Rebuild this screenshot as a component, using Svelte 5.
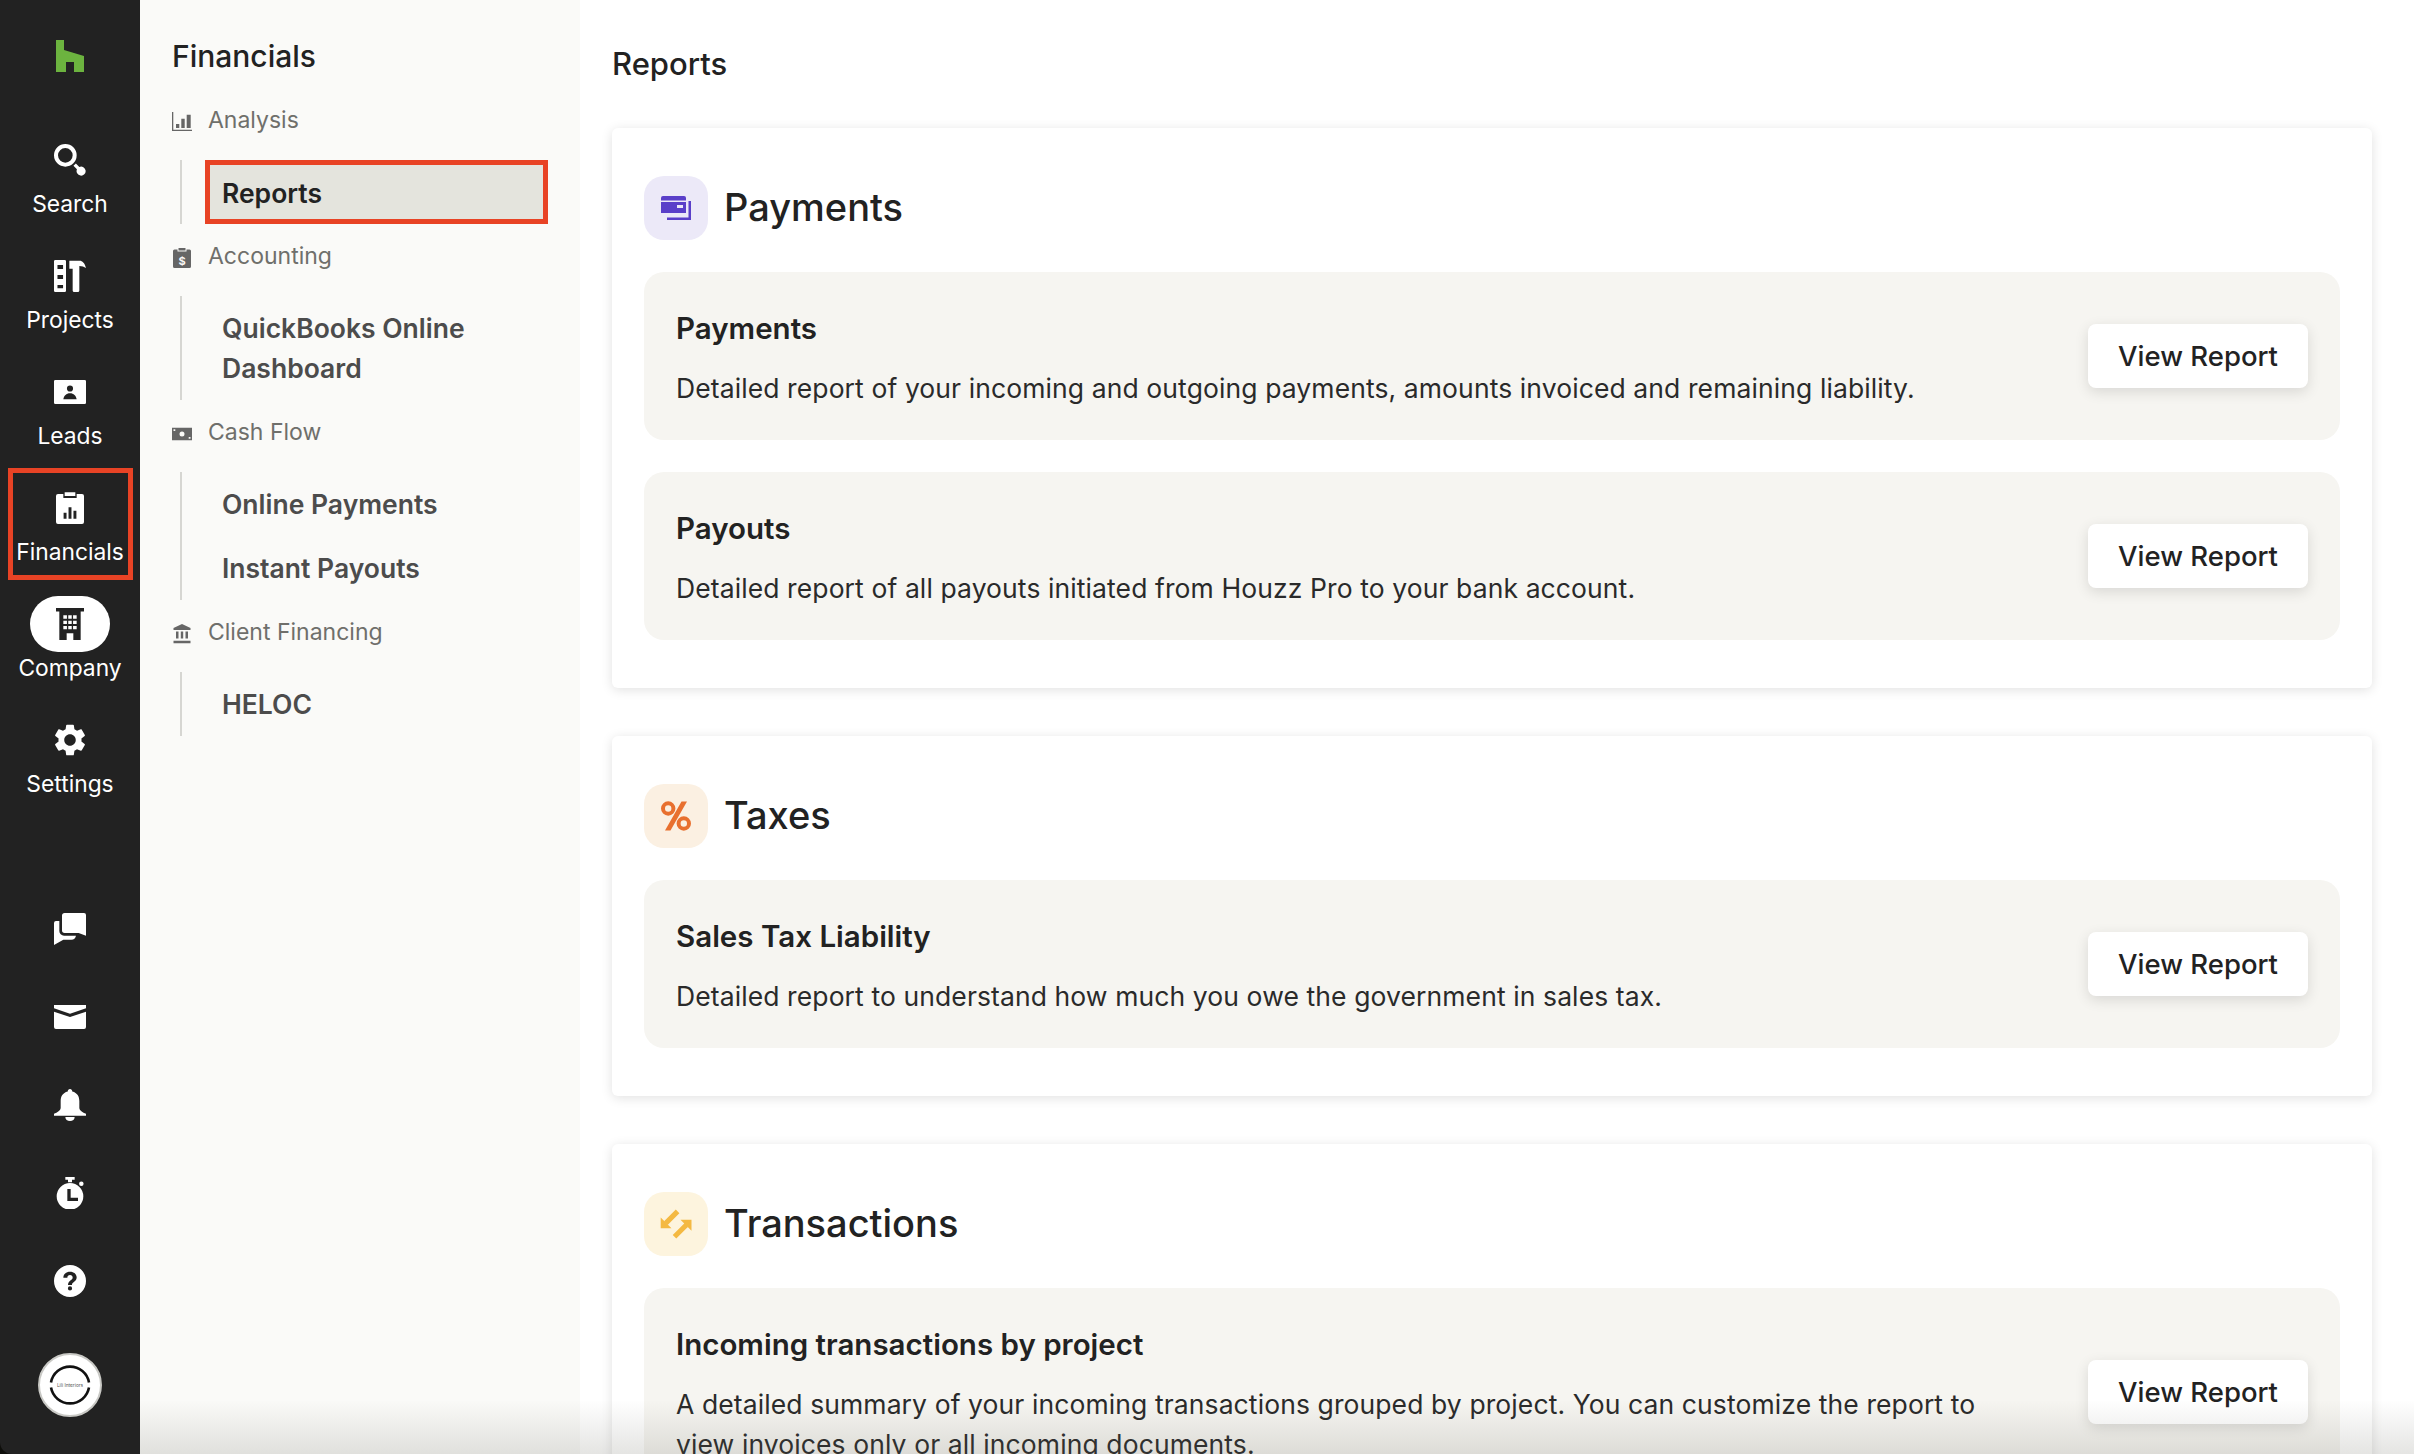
<script>
	const icons = {
		search: { d: 'M0 8.5a8.5 8.5 0 1 0 17 0a8.5 8.5 0 1 0 -17 0Z M3 8.5a5.5 5.5 0 1 1 11 0a5.5 5.5 0 1 1 -11 0Z M14.6 16.4L16.4 14.6L19 17.2A3.4 3.4 0 1 1 17.2 19Z', vb: '0 0 24 24' },
		projects: { d: 'M1 0H8a1 1 0 0 1 1 1V23a1 1 0 0 1-1 1H1a1 1 0 0 1-1-1V1a1 1 0 0 1 1-1Z M2.6 3.7V6.7H6.8V3.7Z M2.6 11.2V14.2H6.8V11.2Z M2.6 18.7V21.2H6.8V18.7Z M11.5 .5H20Q23 1.5 24 6Q22 4.5 19 4.5V22.8A1.2 1.2 0 0 1 17.8 24H15.2A1.2 1.2 0 0 1 14 22.8V6.5H11.5Z', vb: '0 0 24 24' },
		leads: { d: 'M1 3H23a1 1 0 0 1 1 1V20a1 1 0 0 1-1 1H1a1 1 0 0 1-1-1V4a1 1 0 0 1 1-1Z M9.7 9.4a2.3 2.3 0 1 0 4.6 0a2.3 2.3 0 1 0 -4.6 0Z M7 17.5H17C16.5 14.8 14.8 13 12 13S7.5 14.8 7 17.5Z', vb: '0 0 24 24' },
		financials: { d: 'M3 1.5H7V4.5H17V1.5H21A1.5 1.5 0 0 1 22.5 3V22.5A1.5 1.5 0 0 1 21 24H3A1.5 1.5 0 0 1 1.5 22.5V3A1.5 1.5 0 0 1 3 1.5Z M8 .2H16V3H8Z M7.2 15.5H9.4V20H7.2Z M10.9 11.5H13.1V20H10.9Z M14.6 14H16.8V20H14.6Z', vb: '0 0 24 24' },
		company: { d: 'M1.5 0H22.5V2.6H20V24H14.5V19H9.5V24H4V2.6H1.5Z M7 5.5V8H9.7V5.5Z M10.7 5.5V8H13.3V5.5Z M14.3 5.5V8H17V5.5Z M7 9.5V12H9.7V9.5Z M10.7 9.5V12H13.3V9.5Z M14.3 9.5V12H17V9.5Z M7 13.5V16H9.7V13.5Z M10.7 13.5V16H13.3V13.5Z M14.3 13.5V16H17V13.5Z', vb: '0 0 24 24' },
		settings: { d: 'M19.14 12.94c.04-.3.06-.61.06-.94 0-.32-.02-.64-.07-.94l2.03-1.58c.18-.14.23-.41.12-.61l-1.92-3.32c-.12-.22-.37-.29-.59-.22l-2.39.96c-.5-.38-1.03-.7-1.62-.94l-.36-2.54c-.04-.24-.24-.41-.48-.41h-3.84c-.24 0-.43.17-.47.41l-.36 2.54c-.59.24-1.13.57-1.62.94l-2.39-.96c-.22-.08-.47 0-.59.22L2.74 8.87c-.12.21-.08.47.12.61l2.03 1.58c-.05.3-.09.63-.09.94s.02.64.07.94l-2.03 1.58c-.18.14-.23.41-.12.61l1.92 3.32c.12.22.37.29.59.22l2.39-.96c.5.38 1.03.7 1.62.94l.36 2.54c.05.24.24.41.48.41h3.84c.24 0 .44-.17.47-.41l.36-2.54c.59-.24 1.13-.56 1.62-.94l2.39.96c.22.08.47 0 .59-.22l1.92-3.32c.12-.22.07-.47-.12-.61l-2.01-1.58zM12 15.6c-1.98 0-3.6-1.62-3.6-3.6s1.62-3.6 3.6-3.6 3.6 1.62 3.6 3.6-1.62 3.6-3.6 3.6z', vb: '2.6 2 18.8 20' },
		chat: { d: 'M8 0H22.5A1.5 1.5 0 0 1 24 1.5V17L18.5 15H8A2 2 0 0 1 6 13V2A2 2 0 0 1 8 0Z M1.5 6H4V13.5A3.5 3.5 0 0 0 7.5 17H16.5C16 19 15 20 13 20H7L0 24V7.5A1.5 1.5 0 0 1 1.5 6Z', vb: '0 0 24 24' },
		mail: { d: 'M0 3H24V5.5L12 9.5L0 5.5Z M0 8L12 12L24 8V19.5A1.5 1.5 0 0 1 22.5 21H1.5A1.5 1.5 0 0 1 0 19.5Z', vb: '0 0 24 24' },
		bell: { d: 'M12 0C13 0 13.7 .7 13.7 1.8C17.5 2.8 19 5.5 19 9V14C19 16 21.5 17.5 24 18.5V20H0V18.5C2.5 17.5 5 16 5 14V9C5 5.5 6.5 2.8 10.3 1.8C10.3 .7 11 0 12 0Z M8.5 21H15.5C15.5 22.8 14 24 12 24S8.5 22.8 8.5 21Z', vb: '0 0 24 24' },
		timer: { d: 'M8.5 0H15.5V2H13.5V4H10.5V2H8.5Z M18.8 5a1.7 1.7 0 1 0 3.4 0a1.7 1.7 0 1 0 -3.4 0Z M2 14.5a10 10 0 1 0 20 0a10 10 0 1 0 -20 0Z M10 9H12.5V15.5H18V18H10Z', vb: '0 0 24 24' },
		help: { d: 'M0 12a12 12 0 1 0 24 0a12 12 0 1 0 -24 0Z M12 5C9 5 7 6.8 7 9.5H10C10 8.3 10.8 7.5 12 7.5S14 8.2 14 9.3C14 10.3 13.4 10.8 12.5 11.4C11.3 12.3 10.5 13.2 10.5 15H13.5C13.5 13.9 13.9 13.4 14.9 12.7C16.2 11.8 17 10.8 17 9.2C17 6.8 15 5 12 5Z M10.4 17.6a1.6 1.6 0 1 0 3.2 0a1.6 1.6 0 1 0 -3.2 0Z', vb: '0 0 24 24' },
		analysis: { d: 'M0 0H1.3V17.7H20V19H0Z M4 12H7.3V16H4Z M9.3 6.7H12.7V16H9.3Z M14.7 2.7H18.7V16H14.7Z', vb: '0 0 20 20' },
		accounting: { d: 'M2.5 1.5H5.5V3.5H14.5V1.5H17.5A1.5 1.5 0 0 1 19 3V18.5A1.5 1.5 0 0 1 17.5 20H2.5A1.5 1.5 0 0 1 1 18.5V3A1.5 1.5 0 0 1 2.5 1.5Z M6.5 0H13.5V2.5H6.5Z', vb: '0 0 20 20', glyph: '$' },
		cash: { d: 'M0 3.7H20V16.3H0Z M7.5 10a2.5 2.5 0 1 0 5 0a2.5 2.5 0 1 0 -5 0Z M1.5 5.2H3.3V7H1.5Z M16.7 13H18.5V14.8H16.7Z', vb: '0 0 20 20' },
		bank: { d: 'M10 0L18.5 4V6H1.5V4Z M4 7.5H6.5V14.5H4Z M8.8 7.5H11.2V14.5H8.8Z M13.5 7.5H16V14.5H13.5Z M1.5 16.7H18.5V19.3H1.5Z', vb: '0 0 20 20' },
		wallet: { d: 'M3 4H24A2 2 0 0 1 26 6V8.5H1V6A2 2 0 0 1 3 4Z M1 10H26V21H1Z M17 13V16H23V13Z M28.5 9H31V28H7V25.5H28.5Z', vb: '0 0 32 32' },
		percent: { d: 'M1 8.5a7.2 7.2 0 1 0 14.4 0a7.2 7.2 0 1 0 -14.4 0Z M5 8.5a3.2 3.2 0 1 1 6.4 0a3.2 3.2 0 1 1 -6.4 0Z M16.6 23.5a7.2 7.2 0 1 0 14.4 0a7.2 7.2 0 1 0 -14.4 0Z M20.6 23.5a3.2 3.2 0 1 1 6.4 0a3.2 3.2 0 1 1 -6.4 0Z M21.5 1.5H27L10.5 30.5H5Z', vb: '0 0 32 32' },
		transfer: { d: 'M.7 9.5L11.5 20.3H.7Z M4.3 13.1L7.9 16.7L19.4 5.2L15.8 1.6Z M20.5 11.7H31.5V22.7Z M24.2 15.4L27.8 19L16.3 30.5L12.7 26.9Z', vb: '0 0 32 32' }
	};

	const mainNav = [
		{ label: 'Search', icon: 'search' },
		{ label: 'Projects', icon: 'projects' },
		{ label: 'Leads', icon: 'leads' },
		{ label: 'Financials', icon: 'financials', marked: true },
		{ label: 'Company', icon: 'company', active: true },
		{ label: 'Settings', icon: 'settings' }
	];

	const utilNav = ['chat', 'mail', 'bell', 'timer', 'help'];

	const sections = [
		{ label: 'Analysis', icon: 'analysis', items: [{ label: 'Reports', active: true }] },
		{ label: 'Accounting', icon: 'accounting', items: [{ label: 'QuickBooks Online Dashboard' }] },
		{ label: 'Cash Flow', icon: 'cash', items: [{ label: 'Online Payments' }, { label: 'Instant Payouts' }] },
		{ label: 'Client Financing', icon: 'bank', items: [{ label: 'HELOC' }] }
	];

	const groups = [
		{
			title: 'Payments',
			icon: 'wallet',
			tone: 'violet',
			reports: [
				{ name: 'Payments', text: 'Detailed report of your incoming and outgoing payments, amounts invoiced and remaining liability.' },
				{ name: 'Payouts', text: 'Detailed report of all payouts initiated from Houzz Pro to your bank account.' }
			]
		},
		{
			title: 'Taxes',
			icon: 'percent',
			tone: 'orange',
			reports: [
				{ name: 'Sales Tax Liability', text: 'Detailed report to understand how much you owe the government in sales tax.' }
			]
		},
		{
			title: 'Transactions',
			icon: 'transfer',
			tone: 'yellow',
			reports: [
				{ name: 'Incoming transactions by project', text: 'A detailed summary of your incoming transactions grouped by project. You can customize the report to view invoices only or all incoming documents.' }
			]
		}
	];
</script>

{#snippet icon(name, size)}
	<svg width={size} height={size} viewBox={icons[name].vb} fill="currentColor" aria-hidden="true">
		<path fill-rule="evenodd" d={icons[name].d} />
		{#if icons[name].glyph}
			<text class="glyph" x="10" y="16.5" text-anchor="middle">{icons[name].glyph}</text>
		{/if}
	</svg>
{/snippet}

<div class="shell">
	<nav class="rail">
		<svg class="logo" width="28" height="32" viewBox="0 0 28 32" aria-label="Houzz">
			<path fill="#6cb33f" d="M0 0H8V10L28 16V32H18V22H10V32H0Z" />
		</svg>

		<div class="rail-main">
			{#each mainNav as item}
				<a class="rail-item" class:marked={item.marked} class:active={item.active} href="#top">
					<span class="pill">{@render icon(item.icon, 32)}</span>
					<span class="rail-label">{item.label}</span>
				</a>
			{/each}
		</div>

		<div class="rail-util">
			{#each utilNav as name}
				<span class="util">{@render icon(name, 32)}</span>
			{/each}
			<svg class="avatar" width="64" height="64" viewBox="0 0 64 64" aria-label="Account">
				<circle cx="32" cy="32" r="31" fill="#fff" stroke="#c9c9c5" stroke-width="2" />
				<path fill="none" stroke="#111" stroke-width="2.6" d="M13 29.5A19.3 19.3 0 0 1 51 29.5 M13 34.5A19.3 19.3 0 0 0 51 34.5" />
				<text class="avatar-text" x="32" y="33.6" text-anchor="middle">Lili Interiors</text>
			</svg>
		</div>
	</nav>

	<aside class="side">
		<h2>Financials</h2>
		{#each sections as section}
			<div class="side-head">
				<span class="side-icon">{@render icon(section.icon, 20)}</span>
				{section.label}
			</div>
			<ul>
				{#each section.items as link}
					<li class:current={link.active}>{link.label}</li>
				{/each}
			</ul>
		{/each}
	</aside>

	<main>
		<h1>Reports</h1>
		{#each groups as group}
			<section class="card">
				<header>
					<span class="badge {group.tone}">{@render icon(group.icon, 32)}</span>
					<h3>{group.title}</h3>
				</header>
				{#each group.reports as report}
					<div class="report">
						<div class="copy">
							<h4>{report.name}</h4>
							<p>{report.text}</p>
						</div>
						<button type="button">View Report</button>
					</div>
				{/each}
			</section>
		{/each}
	</main>

	<div class="fade"></div>
</div>

<style>
	:global(body) {
		margin: 0;
		background: #0e0e0a;
	}

	.shell {
		position: relative;
		display: flex;
		width: 2414px;
		height: 1454px;
		overflow: hidden;
		font-family: Inter, 'Liberation Sans', sans-serif;
		color: #222;
	}

	.rail {
		flex: 0 0 140px;
		display: flex;
		flex-direction: column;
		align-items: center;
		background: #222;
		color: #fff;
		border-bottom-left-radius: 12px;
	}

	.logo {
		margin-top: 40px;
		flex: none;
	}

	.rail-main {
		display: flex;
		flex-direction: column;
		gap: 28px;
		margin-top: 60px;
		width: 100%;
	}

	.rail-item {
		position: relative;
		display: flex;
		flex-direction: column;
		align-items: center;
		height: 88px;
		color: inherit;
		text-decoration: none;
	}

	.rail-item.marked::after {
		content: '';
		position: absolute;
		top: -12px;
		bottom: -12px;
		left: 8px;
		right: 7px;
		border: 5px solid #e84325;
	}

	.pill {
		display: flex;
		align-items: center;
		justify-content: center;
		width: 80px;
		height: 56px;
		border-radius: 28px;
	}

	.active .pill {
		background: #fff;
		color: #222;
	}

	.rail-label {
		font-size: 22.8px;
		line-height: 32px;
	}

	.rail-util {
		display: flex;
		flex-direction: column;
		align-items: center;
		gap: 56px;
		margin-top: 113px;
	}

	.util {
		display: block;
		height: 32px;
	}

	.avatar-text {
		font-size: 4.8px;
		fill: #555;
	}

	.glyph {
		font-size: 11px;
		font-weight: 700;
		fill: #fafaf8;
	}

	.side {
		flex: 0 0 440px;
		box-sizing: border-box;
		padding: 24px 32px 0;
		background: #fafaf8;
	}

	h2 {
		margin: 0;
		font-size: 30px;
		line-height: 64px;
		font-weight: 500;
		color: #222;
	}

	.side-head {
		display: flex;
		align-items: center;
		gap: 16px;
		height: 64px;
		font-size: 23px;
		color: #6f6f6b;
	}

	.side-icon {
		display: block;
		height: 20px;
		color: #666;
	}

	ul {
		list-style: none;
		margin: 8px 0 0 8px;
		padding: 0 0 0 23px;
		border-left: 2px solid #d6d6d2;
	}

	li {
		padding: 12px 17px;
		font-size: 26.5px;
		line-height: 40px;
		font-weight: 600;
		color: #4c4c4c;
	}

	li.current {
		box-sizing: border-box;
		height: 64px;
		padding: 8px 12px 6px;
		line-height: 40px;
		border: 5px solid #e84325;
		background: #e4e4dd;
		color: #222;
	}

	main {
		flex: 1;
		box-sizing: border-box;
		padding: 0 42px 0 32px;
		background: #fff;
		min-width: 0;
	}

	h1 {
		margin: 0;
		height: 128px;
		font-size: 31px;
		line-height: 128px;
		font-weight: 500;
	}

	.card {
		margin-bottom: 48px;
		padding: 48px 32px;
		border-radius: 6px;
		background: #fff;
		box-shadow: 0 2px 12px rgba(0, 0, 0, 0.12);
	}

	header {
		display: flex;
		align-items: center;
		gap: 16px;
		height: 64px;
	}

	.badge {
		display: flex;
		align-items: center;
		justify-content: center;
		width: 64px;
		height: 64px;
		border-radius: 20px;
	}

	.violet {
		background: #ece9f8;
		color: #5a3fc9;
	}

	.orange {
		background: #fbf0e2;
		color: #e8702f;
	}

	.yellow {
		background: #fdf4de;
		color: #f4b942;
	}

	h3 {
		margin: 0 0 3px;
		font-size: 38px;
		font-weight: 500;
	}

	.report {
		display: flex;
		align-items: center;
		gap: 100px;
		margin-top: 32px;
		padding: 36px 32px 32px;
		border-radius: 20px;
		background: #f6f5f1;
	}

	.copy {
		flex: 1;
		min-width: 0;
	}

	h4 {
		margin: 0 0 20px;
		font-size: 29.5px;
		line-height: 40px;
		font-weight: 600;
	}

	p {
		margin: 0;
		font-size: 26.5px;
		line-height: 40px;
		letter-spacing: 0.1px;
		color: #2a2a2a;
	}

	button {
		flex: none;
		width: 220px;
		height: 64px;
		margin-top: -4px;
		border: none;
		border-radius: 8px;
		background: #fff;
		box-shadow: 0 4px 14px rgba(0, 0, 0, 0.12);
		font: 500 27.5px Inter, 'Liberation Sans', sans-serif;
		color: #222;
	}

	.fade {
		position: absolute;
		left: 140px;
		right: 0;
		bottom: 0;
		height: 54px;
		background: linear-gradient(rgba(90, 90, 80, 0), rgba(90, 90, 80, 0.16));
		pointer-events: none;
	}
</style>
